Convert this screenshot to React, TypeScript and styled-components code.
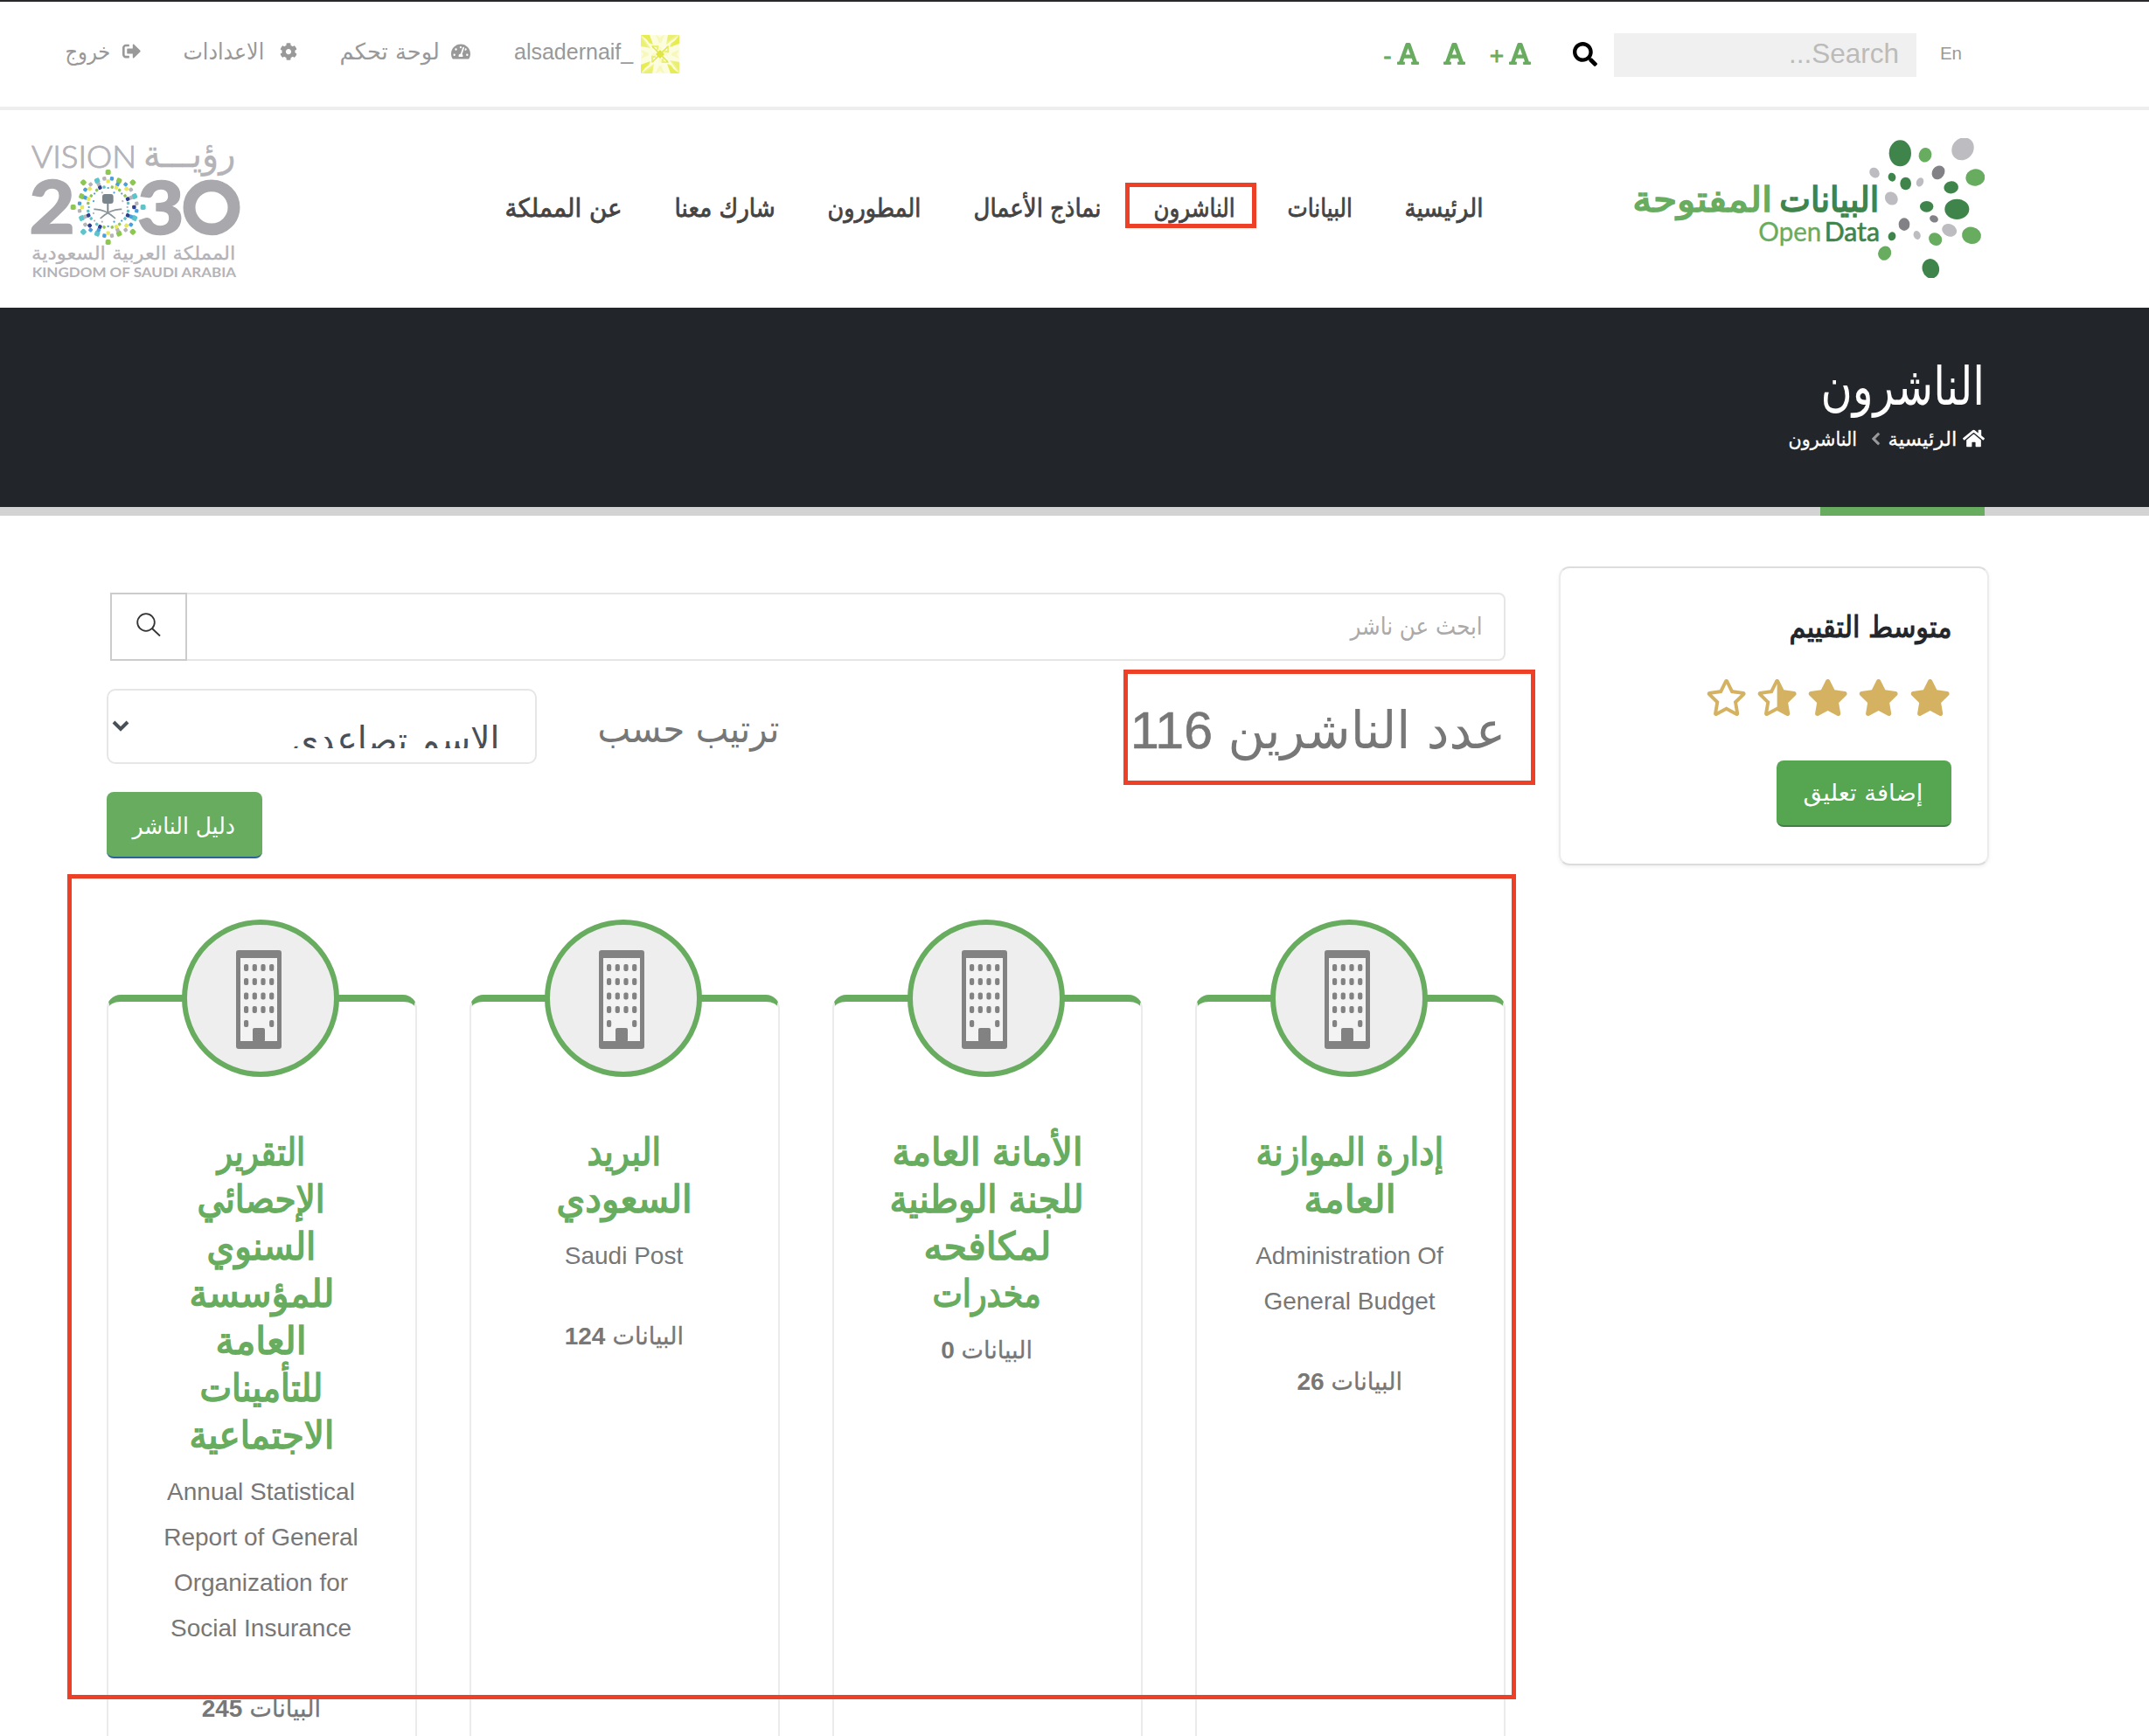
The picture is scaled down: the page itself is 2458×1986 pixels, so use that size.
import React, { useLayoutEffect, useRef, useState } from "react";
import styled, { createGlobalStyle } from "styled-components";
import {
  FaChevronLeft,
  FaCog,
  FaFont,
  FaHome,
  FaRegStar,
  FaSearch,
  FaSignOutAlt,
  FaStar,
  FaStarHalfAlt,
  FaTachometerAlt,
} from "react-icons/fa";

const GREEN = "#68ac5f";
const RED = "#ee4027";
const GRAY = "#777";
const LATIN = '"Liberation Sans", Arial, sans-serif';
const ARABIC = '"DejaVu Sans", "Liberation Sans", sans-serif';

const GlobalStyle = createGlobalStyle`
  * { box-sizing: border-box; }
  body { margin: 0; background: #fff; font-family: ${LATIN}; overflow: hidden; }
`;

/* ---------- condensed Arabic label ---------- */

const LabelBox = styled.span<{ $w: number; $size: number; $line: number; $color?: string; $stroke?: number }>`
  display: block;
  flex: none;
  width: ${(p) => p.$w}px;
  height: ${(p) => p.$line}px;
  font-family: ${ARABIC};
  font-size: ${(p) => p.$size}px;
  font-weight: 400;
  line-height: ${(p) => p.$line}px;
  color: ${(p) => p.$color ?? "inherit"};
  -webkit-text-stroke: ${(p) => p.$stroke ?? 0}px currentColor;
  white-space: nowrap;
  direction: rtl;
`;

const LabelText = styled.span`
  display: inline-block;
  transform-origin: 100% 50%;
`;

type LabelProps = { text: string; w: number; size: number; line: number; color?: string; stroke?: number };

function Label({ text, w, size, line, color, stroke }: LabelProps) {
  const ref = useRef<HTMLSpanElement>(null);
  const [ratio, setRatio] = useState(1);
  useLayoutEffect(() => {
    if (ref.current) setRatio((w + 2) / ref.current.offsetWidth);
  }, [w, text]);
  return (
    <LabelBox $w={w} $size={size} $line={line} $color={color} $stroke={stroke}>
      <LabelText ref={ref} style={{ transform: `translateX(0.5px) scaleX(${ratio})` }}>
        {text}
      </LabelText>
    </LabelBox>
  );
}

/* ---------- page ---------- */

const Page = styled.div`
  width: 2458px;
  height: 1986px;
  overflow: hidden;
  direction: rtl;
  border-top: 2px solid #28282a;
  background: #fff;
`;

const Highlight = styled.div<{ $t: number; $r: number; $b: number; $l: number }>`
  position: absolute;
  top: ${(p) => p.$t}px;
  right: ${(p) => p.$r}px;
  bottom: ${(p) => p.$b}px;
  left: ${(p) => p.$l}px;
  border: 5px solid ${RED};
  pointer-events: none;
`;

/* ---------- top bar ---------- */

const TopBar = styled.div`
  display: flex;
  align-items: center;
  height: 124px;
  padding: 0 214px 0 76px;
  border-bottom: 4px solid #eee;
  color: #999;
`;

const Language = styled.a`
  font-size: 20.5px;
  line-height: 28px;
  width: 24px;
  margin-left: 28px;
  margin-bottom: 3px;
`;

const SiteSearch = styled.div`
  display: flex;
  align-items: center;
  width: 346px;
  height: 50px;
  padding-right: 20px;
  margin: 2px 0 0 19px;
  background: #f0f0f0;
  color: #bbb;
  font-size: 31.5px;
  line-height: 44px;
  padding-bottom: 5px;
`;

const BlackSearch = styled(FaSearch)`
  width: 28px;
  height: 28px;
  color: #000;
`;

const FontTools = styled.div`
  display: flex;
  align-items: center;
  gap: 28px;
  margin-right: 48px;
  margin-bottom: 2px;
  color: ${GREEN};
`;

const FontTool = styled.div`
  display: flex;
  align-items: center;
  gap: 6px;
  height: 30px;
  font-size: 28px;
  line-height: 30px;
  -webkit-text-stroke: 0.8px currentColor;
  svg { width: 25px; height: 29px; }
  span { padding-top: 5px; }
`;

const UserMenu = styled.div`
  display: flex;
  align-items: center;
  gap: 50px;
  margin-right: auto;
`;

const UserLink = styled.div<{ $gap?: number }>`
  display: flex;
  align-items: center;
  gap: ${(p) => p.$gap ?? 14}px;
  svg { flex: none; }
`;

const UserName = styled.span`
  font-size: 25px;
  line-height: 32px;
  margin-bottom: 6px;
  width: 137px;
  direction: ltr;
`;

const LinkIcon = styled.span<{ $w: number }>`
  display: flex;
  margin-bottom: 7px;
  svg { width: ${(p) => p.$w}px; height: ${(p) => p.$w}px; }
`;

const Lift = styled.div`
  margin-bottom: 6px;
`;

function Avatar() {
  return (
    <svg width="44" height="44" viewBox="0 0 44 44">
      <rect width="44" height="44" fill="#fcfcde" />
      {[0, 90, 180, 270].map((a) => (
        <g key={a} transform={`rotate(${a} 22 22)`} fill="#e6ec52">
          <path d="M0 0H10L14 11Z" />
          <path d="M0 3L8 14L0 13Z" opacity=".45" />
          <path d="M17 0L22 3L27 0L23 9H21Z" opacity=".25" />
          <path d="M31 0L44 0L29 11Z" opacity=".6" />
          <path d="M35 9L44 4V9L33 13Z" opacity=".8" />
          <path d="M12 12H20L22 16L16 18Z" opacity=".75" />
          <circle cx="16" cy="16" r="2.2" fill="#fff" />
          <circle cx="22" cy="15" r="2" fill="#fbfbc8" />
        </g>
      ))}
      <path d="M22 17L27 22L22 27L17 22Z" fill="#dfe63a" />
      <path d="M13 13L31 31M31 13L13 31" stroke="#e0e64c" strokeWidth="1.6" />
    </svg>
  );
}

/* ---------- header ---------- */

const Header = styled.header`
  display: flex;
  align-items: center;
  height: 226px;
  padding: 0 188px 2px 33px;
`;

const Nav = styled.nav`
  display: flex;
  gap: 62px;
  margin-right: 172px;
`;

const NavItem = styled.div`
  position: relative;
`;

const VisionWrap = styled.div`
  display: flex;
  margin-right: auto;
`;

const NAV: { text: string; w: number; active?: boolean }[] = [
  { text: "الرئيسية", w: 88 },
  { text: "البيانات", w: 72 },
  { text: "الناشرون", w: 91, active: true },
  { text: "نماذج الأعمال", w: 144 },
  { text: "المطورون", w: 105 },
  { text: "شارك معنا", w: 113 },
  { text: "عن المملكة", w: 132 },
];

const DARK_DOT = "#3f854b";
const LIGHT_DOT = "#68ac5f";
const PALE_DOT = "#bcbcc1";
const SLATE_DOT = "#828186";

const DOTS: [number, number, number, number, string, number][] = [
  [940, 76, 38, 45, DARK_DOT, 0],
  [1026, 82, 22, 25, LIGHT_DOT, 15],
  [1155, 61, 36, 41, PALE_DOT, 40],
  [852, 143, 16, 19, PALE_DOT, -40],
  [912, 158, 13, 15, DARK_DOT, -15],
  [959, 180, 19, 22, DARK_DOT, 0],
  [1008, 175, 12, 16, PALE_DOT, 25],
  [1071, 142, 21, 25, SLATE_DOT, 35],
  [1198, 159, 33, 29, LIGHT_DOT, -10],
  [1115, 193, 25, 21, DARK_DOT, -10],
  [910, 231, 21, 24, PALE_DOT, -40],
  [1031, 259, 23, 19, DARK_DOT, 0],
  [1135, 268, 42, 35, DARK_DOT, 0],
  [1056, 301, 15, 12, SLATE_DOT, 25],
  [954, 320, 19, 22, SLATE_DOT, 0],
  [1109, 340, 26, 21, PALE_DOT, 25],
  [912, 361, 13, 15, DARK_DOT, 15],
  [998, 357, 12, 15, PALE_DOT, -20],
  [1061, 371, 24, 21, LIGHT_DOT, 40],
  [1185, 358, 33, 29, LIGHT_DOT, 12],
  [887, 419, 22, 25, LIGHT_DOT, 25],
  [1045, 472, 29, 34, DARK_DOT, -15],
];

function OpenDataLogo() {
  return (
    <svg width="402" height="160" viewBox="24 24 1206 480" direction="ltr">
      {DOTS.map(([cx, cy, rx, ry, fill, rot], i) => (
        <ellipse key={i} cx={cx} cy={cy} rx={rx} ry={ry} fill={fill} transform={`rotate(${rot} ${cx} ${cy})`} />
      ))}
      <g fontFamily="DejaVu Sans" fontSize="120" strokeWidth="5">
        <text x="526" y="275" fill={DARK_DOT} stroke={DARK_DOT} textLength="342" lengthAdjust="spacingAndGlyphs">
          البيانات
        </text>
        <text x="22" y="275" fill={LIGHT_DOT} stroke={LIGHT_DOT} textLength="480" lengthAdjust="spacingAndGlyphs">
          المفتوحة
        </text>
      </g>
      <g fontFamily="Lato" fontSize="90">
        <text x="454" y="378" fill={LIGHT_DOT} stroke={LIGHT_DOT} strokeWidth="1" textLength="216" lengthAdjust="spacingAndGlyphs">
          Open
        </text>
        <text x="680" y="378" fill={DARK_DOT} stroke={DARK_DOT} strokeWidth="2" textLength="190" lengthAdjust="spacingAndGlyphs">
          Data
        </text>
      </g>
    </svg>
  );
}

const EMBLEM = ["#8cc751", "#2f3f8f", "#4aa0dc", "#5cc5cc", "#e8e85c", "#b5b4b8"];

function Emblem() {
  const rings: [number, number, number, number][] = [
    [109, 16, 9, 0],
    [94, 24, 6.5, 0.5],
    [81, 16, 6.5, 0],
    [70, 16, 5, 0.5],
    [60, 16, 3, 0],
  ];
  return (
    <g>
      {rings.map(([r, n, s, off], k) =>
        Array.from({ length: n }, (_, i) => {
          const a = ((i + off) / n) * Math.PI * 2 - Math.PI / 2;
          const rr = r * (1 + 0.1 * Math.cos(8 * (a + Math.PI / 2)));
          const x = 281 + rr * Math.cos(a);
          const y = 261 + rr * Math.sin(a);
          return (
            <rect
              key={`${k}-${i}`}
              x={x - s}
              y={y - s}
              width={s * 2}
              height={s * 2}
              rx={s * 0.6}
              fill={EMBLEM[(i * 5 + k * 2 + (i % 3)) % 6]}
              transform={`rotate(${(a * 180) / Math.PI} ${x} ${y})`}
            />
          );
        }),
      )}
      <rect x="261" y="216" width="38" height="33" rx="9" fill="#7b868c" />
      <path d="M280 246V282" stroke="#7b868c" strokeWidth="6" />
      <path d="M232 268Q270 266 306 300M328 268Q290 266 254 300" stroke="#8a9499" strokeWidth="5" fill="none" />
    </g>
  );
}

function VisionLogo() {
  return (
    <svg width="244" height="164" viewBox="9 18 732 492" direction="ltr">
      <g fill="#b4b3b8" stroke="#b4b3b8">
        <text x="18" y="125" fontFamily="Lato" fontWeight="300" fontSize="109" strokeWidth="3" textLength="360" lengthAdjust="spacingAndGlyphs">
          VISION
        </text>
        <text x="402" y="122" fontFamily="DejaVu Sans" fontSize="128" strokeWidth="1" textLength="316" lengthAdjust="spacingAndGlyphs">
          رؤيـــة
        </text>
        <text x="18" y="440" fontFamily="DejaVu Sans" fontSize="64" strokeWidth="1" textLength="700" lengthAdjust="spacingAndGlyphs">
          المملكة العربية السعودية
        </text>
        <text x="20" y="502" fontFamily="Lato" fontWeight="700" fontSize="43" strokeWidth="0" textLength="700" lengthAdjust="spacingAndGlyphs">
          KINGDOM OF SAUDI ARABIA
        </text>
      </g>
      <g fill="#a9a8ad" stroke="#a9a8ad" strokeWidth="4" fontFamily="Lato" fontWeight="900" fontSize="254">
        <text x="10" y="351" textLength="158" lengthAdjust="spacingAndGlyphs">2</text>
        <text x="380" y="353" textLength="162" lengthAdjust="spacingAndGlyphs">3</text>
      </g>
      <circle cx="636" cy="262" r="75" fill="none" stroke="#a9a8ad" strokeWidth="41" transform="translate(636 262) scale(1.02 1) translate(-636 -262)" />
      <Emblem />
    </svg>
  );
}

/* ---------- hero ---------- */

const Hero = styled.section`
  height: 228px;
  padding: 50px 188px 0 0;
  background: #22252a;
  color: #fff;
`;

const Crumbs = styled.div`
  display: flex;
  align-items: center;
  margin-top: 3px;
`;

const HomeIcon = styled(FaHome)`
  width: 25px;
  height: 25px;
  margin: 0 0 3px 7px;
`;

const CrumbArrow = styled(FaChevronLeft)`
  width: 15px;
  height: 16px;
  margin: 0 8px 3px 14px;
  color: #999;
  stroke: #999;
  stroke-width: 24px;
`;

const Band = styled.div`
  height: 10px;
  padding-right: 188px;
  background: #d3d3d3;
`;

const BandMark = styled.div`
  width: 188px;
  height: 10px;
  background: ${GREEN};
`;

/* ---------- body ---------- */

const Body = styled.div`
  display: flex;
  align-items: flex-start;
  gap: 61px;
  padding: 58px 183px 0 122px;
`;

const RatingCard = styled.aside`
  flex: none;
  width: 492px;
  height: 342px;
  padding: 42px 41px 0 0;
  border: 2px solid #ececec;
  border-top-color: #ddd;
  border-bottom-color: #dcdcdc;
  border-radius: 12px;
  box-shadow: 0 2px 4px rgba(0, 0, 0, 0.06);
`;

const Stars = styled.div`
  display: flex;
  gap: 11px;
  margin: 35px 1px 51px 0;
  color: #d4b262;
  svg { width: 47.3px; height: 42px; }
`;

const MirroredHalf = styled(FaStarHalfAlt)`
  transform: scaleX(-1);
`;

const Button = styled.button<{ $w: number; $bg: string; $edge: string; $pad: number }>`
  display: flex;
  justify-content: flex-start;
  width: ${(p) => p.$w}px;
  height: 76px;
  padding: 0 ${(p) => p.$pad}px 0 0;
  border: 0;
  border-bottom: 2px solid ${(p) => p.$edge};
  border-radius: 8px;
  background: ${(p) => p.$bg};
  color: #fff;
`;

const Main = styled.main`
  flex: none;
  width: 1600px;
  padding-top: 30px;
`;

const PublisherSearch = styled.div`
  display: flex;
  height: 78px;
  padding-left: 4px;
`;

const SearchField = styled.div`
  flex: 1;
  padding-right: 25px;
  border: 2px solid #e6e6e6;
  border-left: 0;
  border-radius: 0 8px 8px 0;
`;

const SearchButton = styled.div`
  display: flex;
  align-items: center;
  justify-content: center;
  width: 88px;
  padding-bottom: 4px;
  border: 2px solid #ccc;
`;

const Controls = styled.div`
  display: flex;
  height: 86px;
  margin: 32px 0;
`;

const Count = styled.div`
  position: relative;
  display: flex;
  gap: 19px;
  margin-left: auto;
  color: ${GRAY};
`;

const CountNumber = styled.span`
  width: 97px;
  font-size: 59px;
  line-height: 96px;
  -webkit-text-stroke: 0.6px currentColor;
`;

const Select = styled.div`
  display: flex;
  justify-content: space-between;
  width: 492px;
  margin-right: 71px;
  padding: 0 41px 0 4px;
  border: 2px solid #e6e6e6;
  border-radius: 10px;
  color: #495057;
`;

const SelectValue = styled.div`
  height: 66px;
  overflow: hidden;
`;

const SelectArrow = styled.svg`
  margin-top: 33px;
`;

const GuideRow = styled.div`
  display: flex;
  justify-content: flex-end;
`;

const Results = styled.div`
  position: relative;
  display: grid;
  grid-template-columns: repeat(4, 355px);
  gap: 60px;
  height: 900px;
  padding-top: 156px;
`;

const Card = styled.article`
  display: flex;
  flex-direction: column;
  align-items: center;
  height: 1000px;
  border: 2px solid #ebebeb;
  border-top: 8px solid ${GREEN};
  border-radius: 16px;
`;

const Emblazon = styled.div`
  display: flex;
  flex: none;
  align-items: center;
  justify-content: center;
  width: 180px;
  height: 180px;
  margin: -94px 2px 59px 0;
  transform: translateX(-1px);
  padding: 3px 4px 0 0;
  direction: ltr;
  border: 6px solid ${GREEN};
  border-radius: 50%;
  background: #eee;
`;

const Description = styled.p`
  margin: 12px 2px 0 0;
  color: ${GRAY};
  font-size: 28px;
  line-height: 52px;
  text-align: center;
  white-space: pre;
`;

const DataCount = styled.div<{ $top: number }>`
  display: flex;
  gap: 10px;
  margin: ${(p) => p.$top}px 2px 0 0;
  color: ${GRAY};
  font-size: 28px;
  line-height: 52px;
  font-weight: 700;
`;

function Building() {
  return (
    <svg width="52" height="113" viewBox="0 0 52 113">
      <rect width="52" height="113" rx="3" fill="#828282" />
      <rect x="5" y="9" width="42" height="95" fill="#f3f3f3" />
      {[20, 36, 52.5, 68, 84].map((y, r) =>
        [11.6, 21.3, 31, 40.7].map((x, c) =>
          r === 4 && (c === 1 || c === 2) ? null : (
            <rect key={`${r}-${c}`} x={x - 2.6} y={y - 4} width="5.2" height="8" rx="2" fill="#828282" />
          ),
        ),
      )}
      <rect x="19" y="89" width="14" height="16" rx="2" fill="#828282" />
    </svg>
  );
}

type Publisher = { title: [string, number][]; description?: string; count: string };

const PUBLISHERS: Publisher[] = [
  {
    title: [["إدارة الموازنة", 213], ["العامة", 103]],
    description: "Administration Of\nGeneral Budget",
    count: "26",
  },
  {
    title: [["الأمانة العامة", 216], ["للجنة الوطنية", 220], ["لمكافحه", 144], ["مخدرات", 122]],
    count: "0",
  },
  { title: [["البريد", 82], ["السعودي", 153]], description: "Saudi Post", count: "124" },
  {
    title: [
      ["التقرير", 99],
      ["الإحصائي", 144],
      ["السنوي", 123],
      ["للمؤسسة", 164],
      ["العامة", 102],
      ["للتأمينات", 139],
      ["الاجتماعية", 164],
    ],
    description: "Annual Statistical\nReport of General\nOrganization for\nSocial Insurance",
    count: "245",
  },
];

export default function App() {
  return (
    <Page>
      <GlobalStyle />
      <TopBar>
        <Language>En</Language>
        <SiteSearch>Search...</SiteSearch>
        <BlackSearch />
        <FontTools>
          <FontTool><FaFont /><span>+</span></FontTool>
          <FontTool><FaFont /></FontTool>
          <FontTool><FaFont /><span>-</span></FontTool>
        </FontTools>
        <UserMenu>
          <UserLink $gap={8}>
            <Avatar />
            <UserName>alsadernaif_</UserName>
          </UserLink>
          <UserLink>
            <LinkIcon $w={22}><FaTachometerAlt /></LinkIcon>
            <Lift><Label text="لوحة تحكم" w={112} size={26} line={32} /></Lift>
          </UserLink>
          <UserLink $gap={18}>
            <LinkIcon $w={20}><FaCog /></LinkIcon>
            <Lift><Label text="الاعدادات" w={91} size={26} line={32} /></Lift>
          </UserLink>
          <UserLink>
            <LinkIcon $w={21}><FaSignOutAlt /></LinkIcon>
            <Lift><Label text="خروج" w={50} size={26} line={32} /></Lift>
          </UserLink>
        </UserMenu>
      </TopBar>

      <Header>
        <OpenDataLogo />
        <Nav>
          {NAV.map((n) => (
            <NavItem key={n.text}>
              <Label text={n.text} w={n.w} size={29} line={41} color="#444" stroke={0.8} />
              {n.active && <Highlight $t={-9} $b={-2} $l={-34} $r={-25} />}
            </NavItem>
          ))}
        </Nav>
        <VisionWrap><VisionLogo /></VisionWrap>
      </Header>

      <Hero>
        <Label text="الناشرون" w={186} size={61} line={80} />
        <Crumbs>
          <HomeIcon />
          <Label text="الرئيسية" w={77} size={22} line={36} stroke={0.3} />
          <CrumbArrow />
          <Label text="الناشرون" w={77} size={22} line={36} stroke={0.3} />
        </Crumbs>
      </Hero>
      <Band><BandMark /></Band>

      <Body>
        <RatingCard>
          <Label text="متوسط التقييم" w={184} size={34} line={50} color="#22252a" stroke={1.1} />
          <Stars>
            <FaStar />
            <FaStar />
            <FaStar />
            <MirroredHalf />
            <FaRegStar />
          </Stars>
          <Button $w={200} $bg="#56a551" $edge="#3f8142" $pad={31}>
            <Label text="إضافة تعليق" w={135} size={26} line={74} />
          </Button>
        </RatingCard>

        <Main>
          <PublisherSearch>
            <SearchField>
              <Label text="ابحث عن ناشر" w={149} size={28} line={74} color="#aaa" />
            </SearchField>
            <SearchButton>
              <svg width="28" height="28" viewBox="0 0 28 28" fill="none" stroke="#333" strokeWidth="1.8">
                <circle cx="11" cy="11" r="9.8" />
                <path d="M18 18L27 26.5" />
              </svg>
            </SearchButton>
          </PublisherSearch>

          <Controls>
            <Count>
              <Label text="عدد الناشرين" w={316} size={59} line={95} />
              <CountNumber>116</CountNumber>
              <Highlight $t={-22} $b={-24} $l={-5} $r={-34} />
            </Count>
            <Label text="ترتيب حسب" w={206} size={44} line={91} color={GRAY} />
            <Select>
              <SelectValue>
                <Label text="الاسم تصاعدي" w={236} size={42} line={114} />
              </SelectValue>
              <SelectArrow width="20" height="16" viewBox="0 0 20 16" fill="none" stroke="#495057" strokeWidth="4">
                <path d="M2 3L10 11L18 3" />
              </SelectArrow>
            </Select>
          </Controls>

          <GuideRow>
            <Button $w={178} $bg={GREEN} $edge="#2a6496" $pad={32}>
              <Label text="دليل الناشر" w={115} size={26} line={78} />
            </Button>
          </GuideRow>

          <Results>
            {PUBLISHERS.map((p) => (
              <Card key={p.count}>
                <Emblazon><Building /></Emblazon>
                {p.title.map(([text, w]) => (
                  <Label key={text} text={text} w={w} size={43.5} line={54} color={GREEN} stroke={1.6} />
                ))}
                {p.description && <Description dir="ltr">{p.description}</Description>}
                <DataCount $top={p.description ? 40 : 12}>
                  <Label text="البيانات" w={79} size={28} line={51} stroke={0.3} />
                  {p.count}
                </DataCount>
              </Card>
            ))}
            <Highlight $t={18} $b={-62} $l={-45} $r={-12} />
          </Results>
        </Main>
      </Body>
    </Page>
  );
}
